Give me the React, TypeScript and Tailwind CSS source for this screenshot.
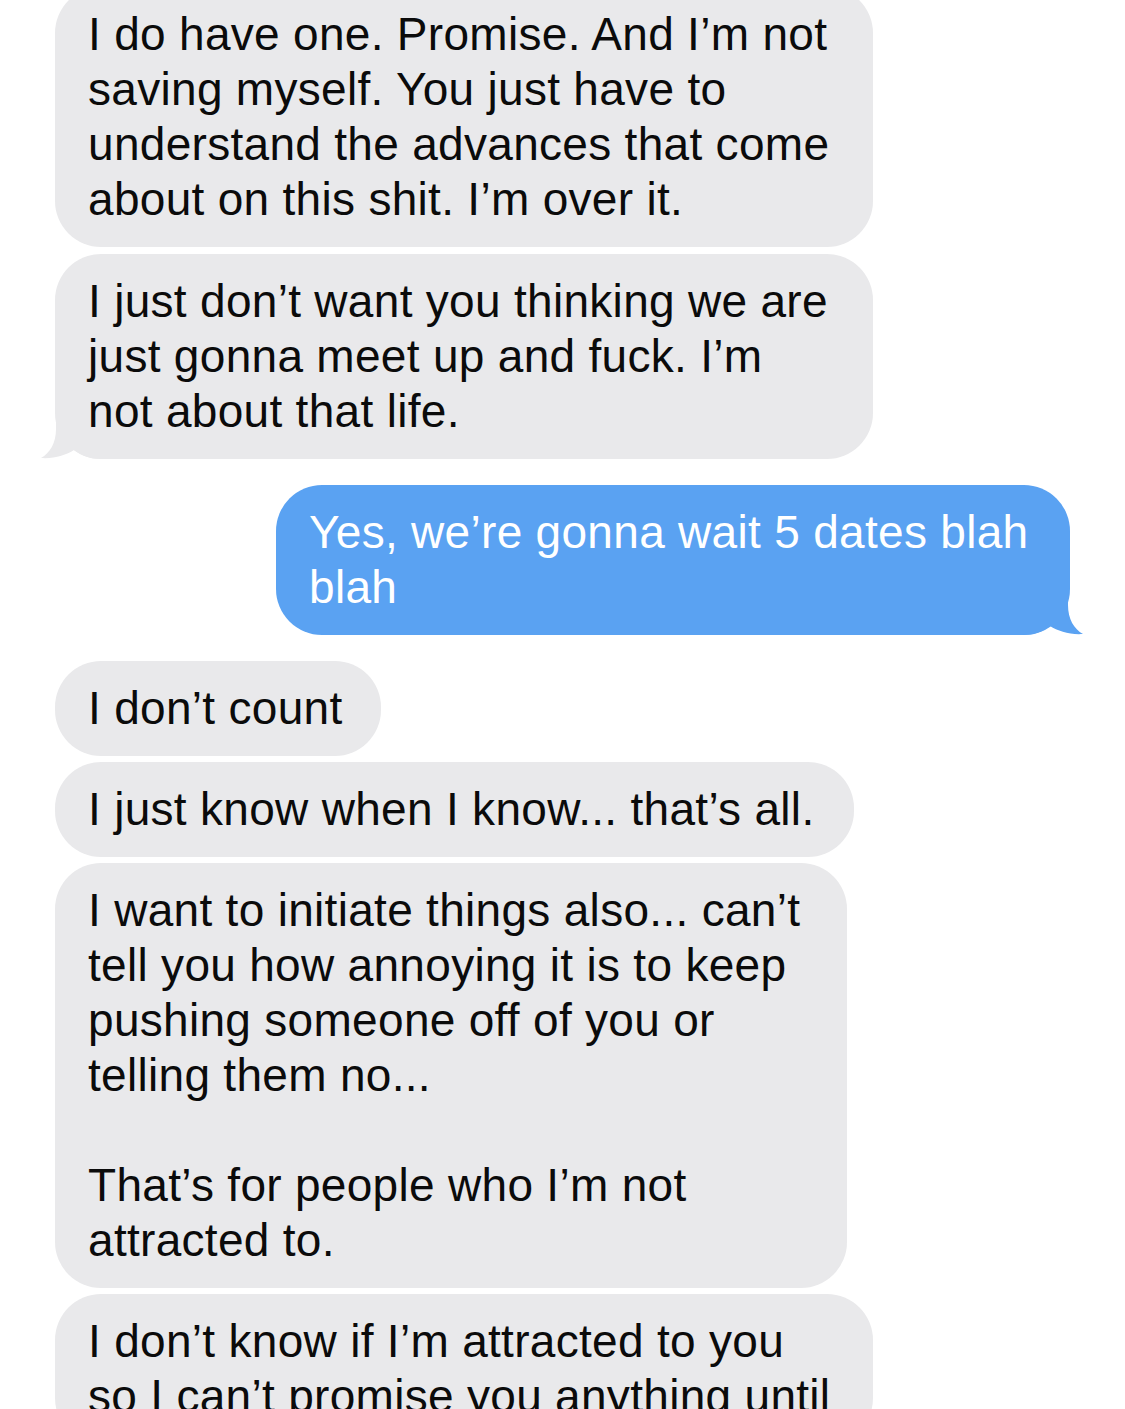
import React from 'react';

const gray = 'relative rounded-[46px] bg-[#e9e9eb] px-[33px] py-[20px] text-[#0b0b0b] whitespace-nowrap';

const tailPath = 'M16 0 L16 20 C16 34 10 44 1 49 C14 50 26 46 34 41 C42 47 50 50 62 50 L62 0 Z';

function LeftTail() {
    return (
        <svg className="absolute left-[-15px] bottom-0" width="62" height="50" viewBox="0 0 62 50">
            <path d={tailPath} fill="#e9e9eb" />
        </svg>
    );
}

function RightTail() {
    return (
        <svg className="absolute right-[-14px] bottom-0" width="62" height="50" viewBox="0 0 62 50">
            <path d={tailPath} fill="#5aa2f2" transform="translate(62 0) scale(-1 1)" />
        </svg>
    );
}

export default function App() {
    return (
        <div className="w-[1125px] h-[1409px] overflow-hidden bg-white font-['Liberation_Sans',sans-serif] text-[46px] leading-[55px] tracking-[0.3px]">
            <div className="flex flex-col items-start pl-[55px] mt-[-13px]">
                <div className={`${gray} w-[818px]`}>
                    I do have one. Promise. And I’m not<br />
                    saving myself. You just have to<br />
                    understand the advances that come<br />
                    about on this shit. I’m over it.
                </div>
                <div className={`${gray} w-[818px] mt-[7px]`}>
                    <LeftTail />
                    <span className="relative">
                        I just don’t want you thinking we are<br />
                        just gonna meet up and fuck. I’m<br />
                        not about that life.
                    </span>
                </div>
                <div className="relative self-end mr-[55px] mt-[26px] w-[794px] rounded-[46px] bg-[#5aa2f2] px-[33px] py-[20px] text-white whitespace-nowrap">
                    <RightTail />
                    <span className="relative">
                        Yes, we’re gonna wait 5 dates blah<br />
                        blah
                    </span>
                </div>
                <div className={`${gray} mt-[26px] w-[326px]`}>I don’t count</div>
                <div className={`${gray} mt-[6px] w-[799px]`}>I just know when I know... that’s all.</div>
                <div className={`${gray} mt-[6px] w-[792px]`}>
                    I want to initiate things also... can’t<br />
                    tell you how annoying it is to keep<br />
                    pushing someone off of you or<br />
                    telling them no...<br />
                    <br />
                    That’s for people who I’m not<br />
                    attracted to.
                </div>
                <div className={`${gray} mt-[6px] w-[818px]`}>
                    I don’t know if I’m attracted to you<br />
                    so I can’t promise you anything until
                </div>
            </div>
        </div>
    );
}
